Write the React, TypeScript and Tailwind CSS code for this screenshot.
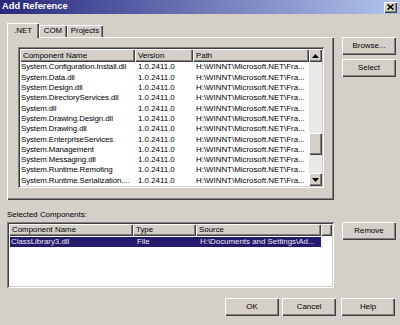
import React from "react";

const RAISED =
  "shadow-[inset_1px_1px_#ffffff,inset_-1px_-1px_#404040,inset_-2px_-2px_#808080]";
const SUNKEN =
  "shadow-[inset_1px_1px_#808080,inset_-1px_-1px_#ffffff,inset_2px_2px_#404040,inset_-2px_-2px_#d4d0c8]";

const rows = [
  "System.Configuration.Install.dll",
  "System.Data.dll",
  "System.Design.dll",
  "System.DirectoryServices.dll",
  "System.dll",
  "System.Drawing.Design.dll",
  "System.Drawing.dll",
  "System.EnterpriseServices",
  "System.Management",
  "System.Messaging.dll",
  "System.Runtime.Remoting",
  "System.Runtime.Serialization....",
];

function Btn({ label, className = "" }: { label: string; className?: string }) {
  return (
    <div
      className={`w-[54px] h-[18px] bg-[#d4d0c8] flex items-center justify-center leading-none ${RAISED} ${className}`}
    >
      {label}
    </div>
  );
}

function Arrow({ up }: { up?: boolean }) {
  return (
    <div className={`w-[13px] h-[13px] bg-[#d4d0c8] flex items-center justify-center ${RAISED}`}>
      <svg width="7" height="4" viewBox="0 0 7 4">
        {up ? (
          <polygon points="3.5,0 7,4 0,4" fill="#000" />
        ) : (
          <polygon points="0,0 7,0 3.5,4" fill="#000" />
        )}
      </svg>
    </div>
  );
}

function HeaderCell({ label, w, grow }: { label: string; w?: string; grow?: boolean }) {
  return (
    <div
      className={`${w ?? ""} ${grow ? "flex-1" : "shrink-0"} h-full bg-[#d4d0c8] flex items-center pl-[3px] whitespace-nowrap overflow-hidden ${RAISED}`}
    >
      {label}
    </div>
  );
}

export default function App() {
  return (
    <div className="w-[400px] h-[325px] bg-[#d4d0c8] font-['Liberation_Sans',Arial,sans-serif] text-[7.9px] text-black overflow-hidden flex flex-col">
      {/* Title bar */}
      <div className="h-[14px] shrink-0 flex items-center justify-between bg-gradient-to-r from-[#2b287c] via-[#7078b8] to-[#b2c4ec] pl-[2px] pr-[3px]">
        <span className="text-white font-bold text-[9.3px] leading-none">Add Reference</span>
        <div className={`w-[13px] h-[11px] bg-[#d4d0c8] flex items-center justify-center ${RAISED}`}>
          <svg width="7" height="6" viewBox="0 0 7 6">
            <path d="M0.5 0.5 L6.5 5.5 M6.5 0.5 L0.5 5.5" stroke="#000" strokeWidth="1.6" />
          </svg>
        </div>
      </div>

      {/* Top section */}
      <div className="flex pl-[7px] mt-[9px]">
        <div className="w-[327px] flex flex-col">
          {/* Tabs */}
          <div className="h-[14px] flex items-end">
            <div
              className={`relative z-10 w-[32px] h-[15px] -mb-px bg-[#d4d0c8] flex items-start justify-center pt-[4px] leading-none shadow-[inset_1px_1px_#ffffff,inset_-1px_0_#404040,inset_-2px_0_#808080]`}
            >
              .NET
            </div>
            <div className="w-[28px] h-[12px] bg-[#d4d0c8] flex items-center justify-center leading-none shadow-[inset_1px_1px_#ffffff,inset_-1px_0_#404040,inset_-2px_0_#808080]">
              COM
            </div>
            <div className="w-[36px] h-[12px] bg-[#d4d0c8] flex items-center justify-center leading-none shadow-[inset_1px_1px_#ffffff,inset_-1px_0_#404040,inset_-2px_0_#808080]">
              Projects
            </div>
          </div>
          {/* Panel */}
          <div className={`h-[163px] pl-[11px] pt-[10px] ${RAISED}`}>
            <div className={`w-[306px] h-[141px] p-[2px] bg-white ${SUNKEN}`}>
              <div className="flex h-full">
                <div className="flex-1 flex flex-col overflow-hidden">
                  <div className="h-[13px] flex shrink-0">
                    <HeaderCell label="Component Name" w="w-[115px]" />
                    <HeaderCell label="Version" w="w-[58px]" />
                    <HeaderCell label="Path" grow />
                  </div>
                  {rows.map((r) => (
                    <div key={r} className="h-[10.4px] flex items-center whitespace-nowrap leading-none">
                      <div className="w-[115px] shrink-0 pl-[1px] tracking-[-0.1px]">{r}</div>
                      <div className="w-[58px] shrink-0 pl-[3px]">1.0.2411.0</div>
                      <div className="flex-1 pl-[3px] overflow-hidden">H:\WINNT\Microsoft.NET\Fra...</div>
                    </div>
                  ))}
                </div>
                {/* Scrollbar */}
                <div className="w-[13px] flex flex-col bg-[#ebe9e6]">
                  <div className="h-[13px]">
                    <Arrow up />
                  </div>
                  <div className="flex-1 flex flex-col">
                    <div className="h-[71px]" />
                    <div className={`h-[22px] bg-[#d4d0c8] ${RAISED}`} />
                  </div>
                  <Arrow />
                </div>
              </div>
            </div>
          </div>
        </div>
        <div className="ml-[8px] flex flex-col gap-[4px] pt-[14px]">
          <Btn label="Browse..." />
          <Btn label="Select" />
        </div>
      </div>

      {/* Selected components label */}
      <div className="pl-[7px] mt-[9px] h-[11px] leading-[11px]">Selected Components:</div>

      {/* Selected list */}
      <div className="flex pl-[7px] mt-[2px]">
        <div className={`w-[327px] h-[66px] p-[2px] bg-white ${SUNKEN}`}>
          <div className="h-[12px] flex">
            <HeaderCell label="Component Name" w="w-[124px]" />
            <HeaderCell label="Type" w="w-[63px]" />
            <HeaderCell label="Source" w="w-[125px]" />
            <HeaderCell label="" grow />
          </div>
          <div className="mt-px ml-px w-[311px] h-[10.4px] bg-[#251b6c] text-[#e8e8f0] flex items-center whitespace-nowrap leading-none">
            <div className="w-[123px] shrink-0 pl-[1px]">ClassLibrary3.dll</div>
            <div className="w-[63px] shrink-0 pl-[4px]">File</div>
            <div className="flex-1 pl-[4px] overflow-hidden">H:\Documents and Settings\Ad...</div>
          </div>
        </div>
        <div className="ml-[8px]">
          <Btn label="Remove" className="h-[17px]" />
        </div>
      </div>

      {/* Bottom buttons */}
      <div className="flex justify-end pr-[5px] mt-[10px]">
        <Btn label="OK" />
        <Btn label="Cancel" className="ml-[3px]" />
        <Btn label="Help" className="ml-[5px]" />
      </div>
    </div>
  );
}
